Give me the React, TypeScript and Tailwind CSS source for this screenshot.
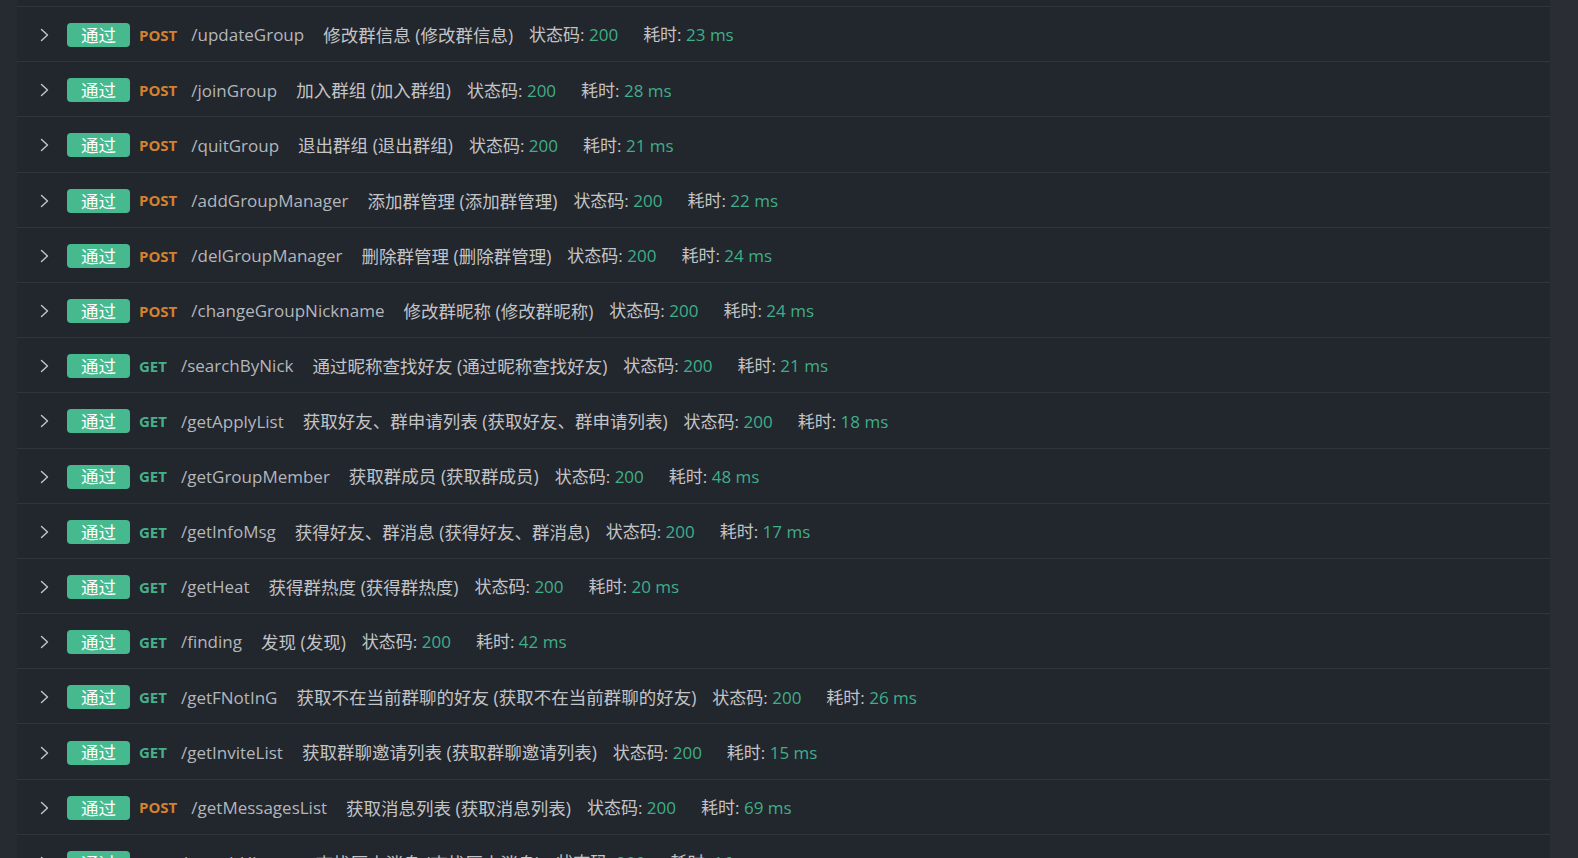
const rows: [string, string, string, number][] = [
  ["POST", "/updateGroup", "修改群信息 (修改群信息)", 23],
  ["POST", "/joinGroup", "加入群组 (加入群组)", 28],
  ["POST", "/quitGroup", "退出群组 (退出群组)", 21],
  ["POST", "/addGroupManager", "添加群管理 (添加群管理)", 22],
  ["POST", "/delGroupManager", "删除群管理 (删除群管理)", 24],
  ["POST", "/changeGroupNickname", "修改群昵称 (修改群昵称)", 24],
  ["GET", "/searchByNick", "通过昵称查找好友 (通过昵称查找好友)", 21],
  ["GET", "/getApplyList", "获取好友、群申请列表 (获取好友、群申请列表)", 18],
  ["GET", "/getGroupMember", "获取群成员 (获取群成员)", 48],
  ["GET", "/getInfoMsg", "获得好友、群消息 (获得好友、群消息)", 17],
  ["GET", "/getHeat", "获得群热度 (获得群热度)", 20],
  ["GET", "/finding", "发现 (发现)", 42],
  ["GET", "/getFNotInG", "获取不在当前群聊的好友 (获取不在当前群聊的好友)", 26],
  ["GET", "/getInviteList", "获取群聊邀请列表 (获取群聊邀请列表)", 15],
  ["POST", "/getMessagesList", "获取消息列表 (获取消息列表)", 69],
  ["GET", "/searchHistory", "查找历史消息 (查找历史消息)", 16],
];

function Chevron() {
  return (
    <svg width="10" height="14" viewBox="0 0 10 14" fill="none" className="shrink-0">
      <path d="M1.5 1.5 L7.5 7 L1.5 12.5" stroke="#c4c6ca" strokeWidth="1.4" strokeLinecap="round" strokeLinejoin="round" />
    </svg>
  );
}

function Row({ method, path, desc, ms }: { method: string; path: string; desc: string; ms: number }) {
  return (
    <div className="flex h-[55.2px] shrink-0 items-center border-b border-[#30343b] pt-[2px] pl-[23px] whitespace-nowrap">
      <Chevron />
      <span className="ml-[17px] flex h-[24px] w-[63px] items-center justify-center rounded-[4px] bg-[#47b98f] text-[17.5px] text-white">
        通过
      </span>
      <span
        className={
          method === "POST"
            ? "ml-[9px] text-[15px] font-bold text-[#d4812f]"
            : "ml-[9px] text-[15px] font-bold text-[#47b08a]"
        }
      >
        {method}
      </span>
      <span className="ml-[14px] text-[#b3b6bb]">{path}</span>
      <span className="ml-[19px] text-[17.5px] text-[#c3c4c6]">{desc}</span>
      <span className="ml-[16px] text-[#c3c4c6]">
        状态码: <span className="text-[#3fae89]">200</span>
      </span>
      <span className="ml-[25px] text-[#c3c4c6]">
        耗时: <span className="text-[#3fae89]">{ms} ms</span>
      </span>
    </div>
  );
}

export default function App() {
  return (
    <div
      className="flex h-[858px] w-[1578px] overflow-hidden bg-[#282c33] text-[17px]"
      style={{ fontFamily: '"Open Sans", "Noto Sans CJK SC", sans-serif' }}
    >
      <div className="w-[17px] shrink-0 bg-[#262a31]" />
      <div className="flex w-[1533px] shrink-0 flex-col bg-[#22262d]">
        <div className="h-[7px] shrink-0 border-b border-[#30343b]" />
        {rows.map(([m, p, d, ms]) => (
          <Row key={p} method={m} path={p} desc={d} ms={ms} />
        ))}
      </div>
      <div className="flex-1 bg-[#2a2d34]" />
    </div>
  );
}
